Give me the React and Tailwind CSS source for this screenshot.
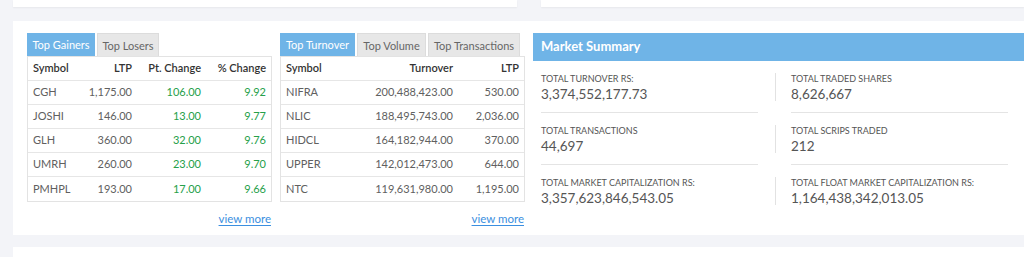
import React, { useState } from 'react';

const gainers = [
  { symbol: 'CGH', ltp: '1,175.00', pt: '106.00', pct: '9.92' },
  { symbol: 'JOSHI', ltp: '146.00', pt: '13.00', pct: '9.77' },
  { symbol: 'GLH', ltp: '360.00', pt: '32.00', pct: '9.76' },
  { symbol: 'UMRH', ltp: '260.00', pt: '23.00', pct: '9.70' },
  { symbol: 'PMHPL', ltp: '193.00', pt: '17.00', pct: '9.66' },
];

const turnover = [
  { symbol: 'NIFRA', turnover: '200,488,423.00', ltp: '530.00' },
  { symbol: 'NLIC', turnover: '188,495,743.00', ltp: '2,036.00' },
  { symbol: 'HIDCL', turnover: '164,182,944.00', ltp: '370.00' },
  { symbol: 'UPPER', turnover: '142,012,473.00', ltp: '644.00' },
  { symbol: 'NTC', turnover: '119,631,980.00', ltp: '1,195.00' },
];

const summary = [
  [
    { label: 'Total Turnover Rs:', value: '3,374,552,177.73' },
    { label: 'Total Traded Shares', value: '8,626,667' },
  ],
  [
    { label: 'Total Transactions', value: '44,697' },
    { label: 'Total Scrips Traded', value: '212' },
  ],
  [
    { label: 'Total Market Capitalization Rs:', value: '3,357,623,846,543.05' },
    { label: 'Total Float Market Capitalization Rs:', value: '1,164,438,342,013.05' },
  ],
];

// Pestañas encima de cada tabla
const Tabs = ({ tabs, active, onChange, widths }) => (
  <div className="flex gap-[2px] h-[23px]">
    {tabs.map((tab, i) => (
      <button
        key={tab}
        onClick={() => onChange(i)}
        className={`${widths[i]} h-full text-[11px] leading-[23px] text-center ${
          active === i
            ? 'bg-[#6fb4e7] text-white'
            : 'bg-[#e7e7e7] text-[#666] border-t border-x border-[#dcdcdc]'
        }`}
      >
        {tab}
      </button>
    ))}
  </div>
);

const ViewMore = () => (
  <div className="flex justify-end pt-[8px] pr-[1px]">
    <a className="text-[11.5px] text-[#3b8fe0] underline underline-offset-2 cursor-pointer">view more</a>
  </div>
);

const GainersTable = () => {
  const [tab, setTab] = useState(0);
  return (
    <div className="w-[245px]">
      <Tabs tabs={['Top Gainers', 'Top Losers']} active={tab} onChange={setTab} widths={['w-[68px]', 'w-[62px]']} />
      <div className="border border-[#e3e3e3]">
        <div className="flex h-[24px] items-center border-b border-[#e6e6e6] text-[11px] font-semibold text-[#333]">
          <div className="w-[40px] pl-[5px]">Symbol</div>
          <div className="w-[68px] text-right pr-[4px]">LTP</div>
          <div className="w-[70px] text-right pr-[5px]">Pt. Change</div>
          <div className="flex-1 text-right pr-[5px]">% Change</div>
        </div>
        {gainers.map((row, i) => (
          <div
            key={row.symbol}
            className={`flex h-[24px] items-center text-[11px] text-[#606060] ${
              i < gainers.length - 1 ? 'border-b border-[#e6e6e6]' : ''
            }`}
          >
            <div className="w-[40px] pl-[5px]">{row.symbol}</div>
            <div className="w-[68px] text-right pr-[4px]">{row.ltp}</div>
            <div className="w-[70px] text-right pr-[5px] text-[#26a04a]">{row.pt}</div>
            <div className="flex-1 text-right pr-[5px] text-[#26a04a]">{row.pct}</div>
          </div>
        ))}
      </div>
      <ViewMore />
    </div>
  );
};

const TurnoverTable = () => {
  const [tab, setTab] = useState(0);
  return (
    <div className="w-[245px]">
      <Tabs
        tabs={['Top Turnover', 'Top Volume', 'Top Transactions']}
        active={tab}
        onChange={setTab}
        widths={['w-[75px]', 'w-[69px]', 'w-[92px]']}
      />
      <div className="border border-[#e3e3e3]">
        <div className="flex h-[24px] items-center border-b border-[#e6e6e6] text-[11px] font-semibold text-[#333]">
          <div className="w-[90px] pl-[5px]">Symbol</div>
          <div className="w-[87px] text-right pr-[5px]">Turnover</div>
          <div className="flex-1 text-right pr-[5px]">LTP</div>
        </div>
        {turnover.map((row, i) => (
          <div
            key={row.symbol}
            className={`flex h-[24px] items-center text-[11px] text-[#606060] ${
              i < turnover.length - 1 ? 'border-b border-[#e6e6e6]' : ''
            }`}
          >
            <div className="w-[90px] pl-[5px]">{row.symbol}</div>
            <div className="w-[87px] text-right pr-[5px]">{row.turnover}</div>
            <div className="flex-1 text-right pr-[5px]">{row.ltp}</div>
          </div>
        ))}
      </div>
      <ViewMore />
    </div>
  );
};

const SummaryCell = ({ label, value, divider, last }) => (
  <div className={divider ? 'ml-[17px] w-[233px] flex' : 'w-[217px]'}>
    {divider && <div className="w-px h-[28px] mt-[12px] bg-[#e2e2e2] mr-[15px]" />}
    <div className="w-[217px]">
      <div className="pt-[12px] h-[40px]">
        <div className="text-[9px] leading-[11px] uppercase text-[#555]">{label}</div>
        <div className="mt-[2px] text-[13.5px] leading-[17px] text-[#555]">{value}</div>
      </div>
      {!last && <div className="mt-[11px] h-px bg-[#e4e4e4]" />}
    </div>
  </div>
);

const MarketSummary = () => (
  <div className="flex-1">
    <div className="h-[28px] bg-[#6fb4e7] pl-[8px] flex items-center text-[13px] font-bold text-white">
      Market Summary
    </div>
    <div className="pl-[8px]">
      {summary.map((row, r) => (
        <div key={r} className="flex">
          <SummaryCell {...row[0]} last={r === summary.length - 1} />
          <SummaryCell {...row[1]} divider last={r === summary.length - 1} />
        </div>
      ))}
    </div>
  </div>
);

export default function App() {
  return (
    <div className="w-[1024px] h-[257px] overflow-hidden bg-[#f3f4f8] font-['Lato','Noto_Sans',sans-serif]">
      {/* tarjetas superiores cortadas */}
      <div className="flex gap-[24px] pl-[13px] h-[7px]">
        <div className="w-[504px] bg-white shadow-[0_1px_2px_rgba(0,0,0,0.05)]" />
        <div className="flex-1 bg-white shadow-[0_1px_2px_rgba(0,0,0,0.05)]" />
      </div>
      {/* tarjeta principal */}
      <div className="mt-[14px] ml-[13px] h-[214px] bg-white pt-[12px] pl-[14px] flex gap-[8px]">
        <GainersTable />
        <TurnoverTable />
        <MarketSummary />
      </div>
      <div className="mt-[12px] ml-[13px] h-[20px] bg-white" />
    </div>
  );
}
